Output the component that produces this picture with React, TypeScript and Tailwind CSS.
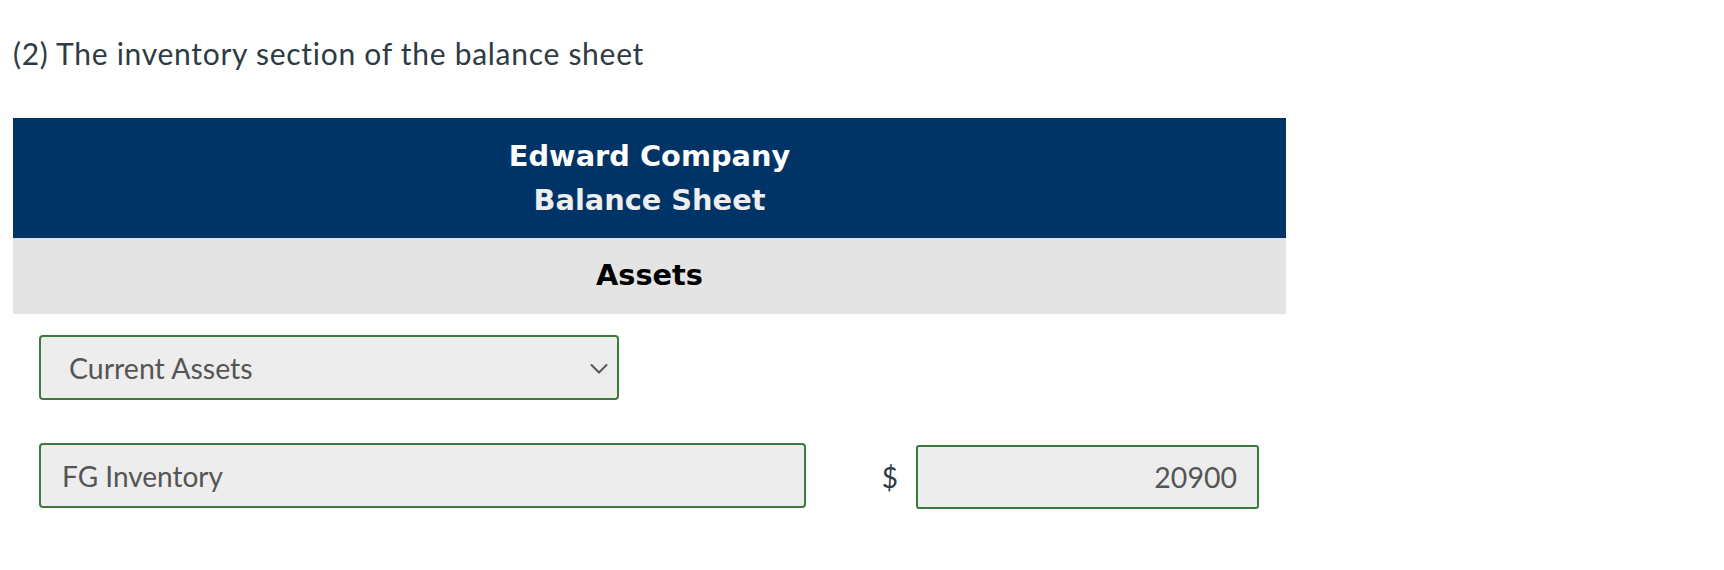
export default function App() {
  return (
    <div className="min-h-[570px] w-[1724px] bg-white pl-[13px] pt-[31px] font-['Lato',sans-serif]">
      {/* Question label */}
      <p className="text-[30px] leading-[44px] tracking-[0.72px] text-[#2d3b45] [font-variant-ligatures:none]">
        (2) The inventory section of the balance sheet
      </p>

      <div className="mt-[43px] w-[1273px]">
        {/* Statement heading */}
        <div className="flex h-[120px] flex-col items-center justify-center bg-[#003366] font-['DejaVu_Sans',sans-serif] text-[28.8px] font-bold leading-[44px]">
          <span className="text-white">Edward Company</span>
          <span className="text-[#eeeeee]">Balance Sheet</span>
        </div>
        <div className="flex h-[76px] items-center justify-center bg-[#e4e4e4] font-['DejaVu_Sans',sans-serif] text-[28.8px] font-bold text-black">
          Assets
        </div>

        {/* Section select */}
        <div className="pl-[26px] pt-[21px]">
          <div className="flex h-[65px] w-[580px] items-center justify-between rounded-[4px] border-2 border-[#3d7a3d] bg-[#ededed] pl-[28px] pr-[9px] pt-[2px] text-[28.5px] text-[#555555]">
            <span>Current Assets</span>
            <svg width="18" height="12" viewBox="0 0 18 12" fill="none">
              <polyline points="1.5,2 9,9.5 16.5,2" stroke="#555555" strokeWidth="2" strokeLinecap="round" strokeLinejoin="round" />
            </svg>
          </div>
        </div>

        {/* Line item */}
        <div className="flex items-start pl-[26px] pt-[43px]">
          <div className="flex h-[65px] w-[767px] items-center rounded-[4px] border-2 border-[#3d7a3d] bg-[#ededed] pl-[21px] text-[28px] text-[#555555]">
            FG Inventory
          </div>
          <div className="flex h-[65px] w-[110px] items-center justify-end pr-[18px] pt-[2px] text-[28px] text-[#2d3b45]">$</div>
          <div className="mt-[2px] flex h-[64px] w-[343px] items-center justify-end rounded-[3px] border-2 border-[#3d7a3d] bg-[#ededed] pr-[20px] text-[28.5px] text-[#555555]">
            20900
          </div>
        </div>
      </div>
    </div>
  );
}
